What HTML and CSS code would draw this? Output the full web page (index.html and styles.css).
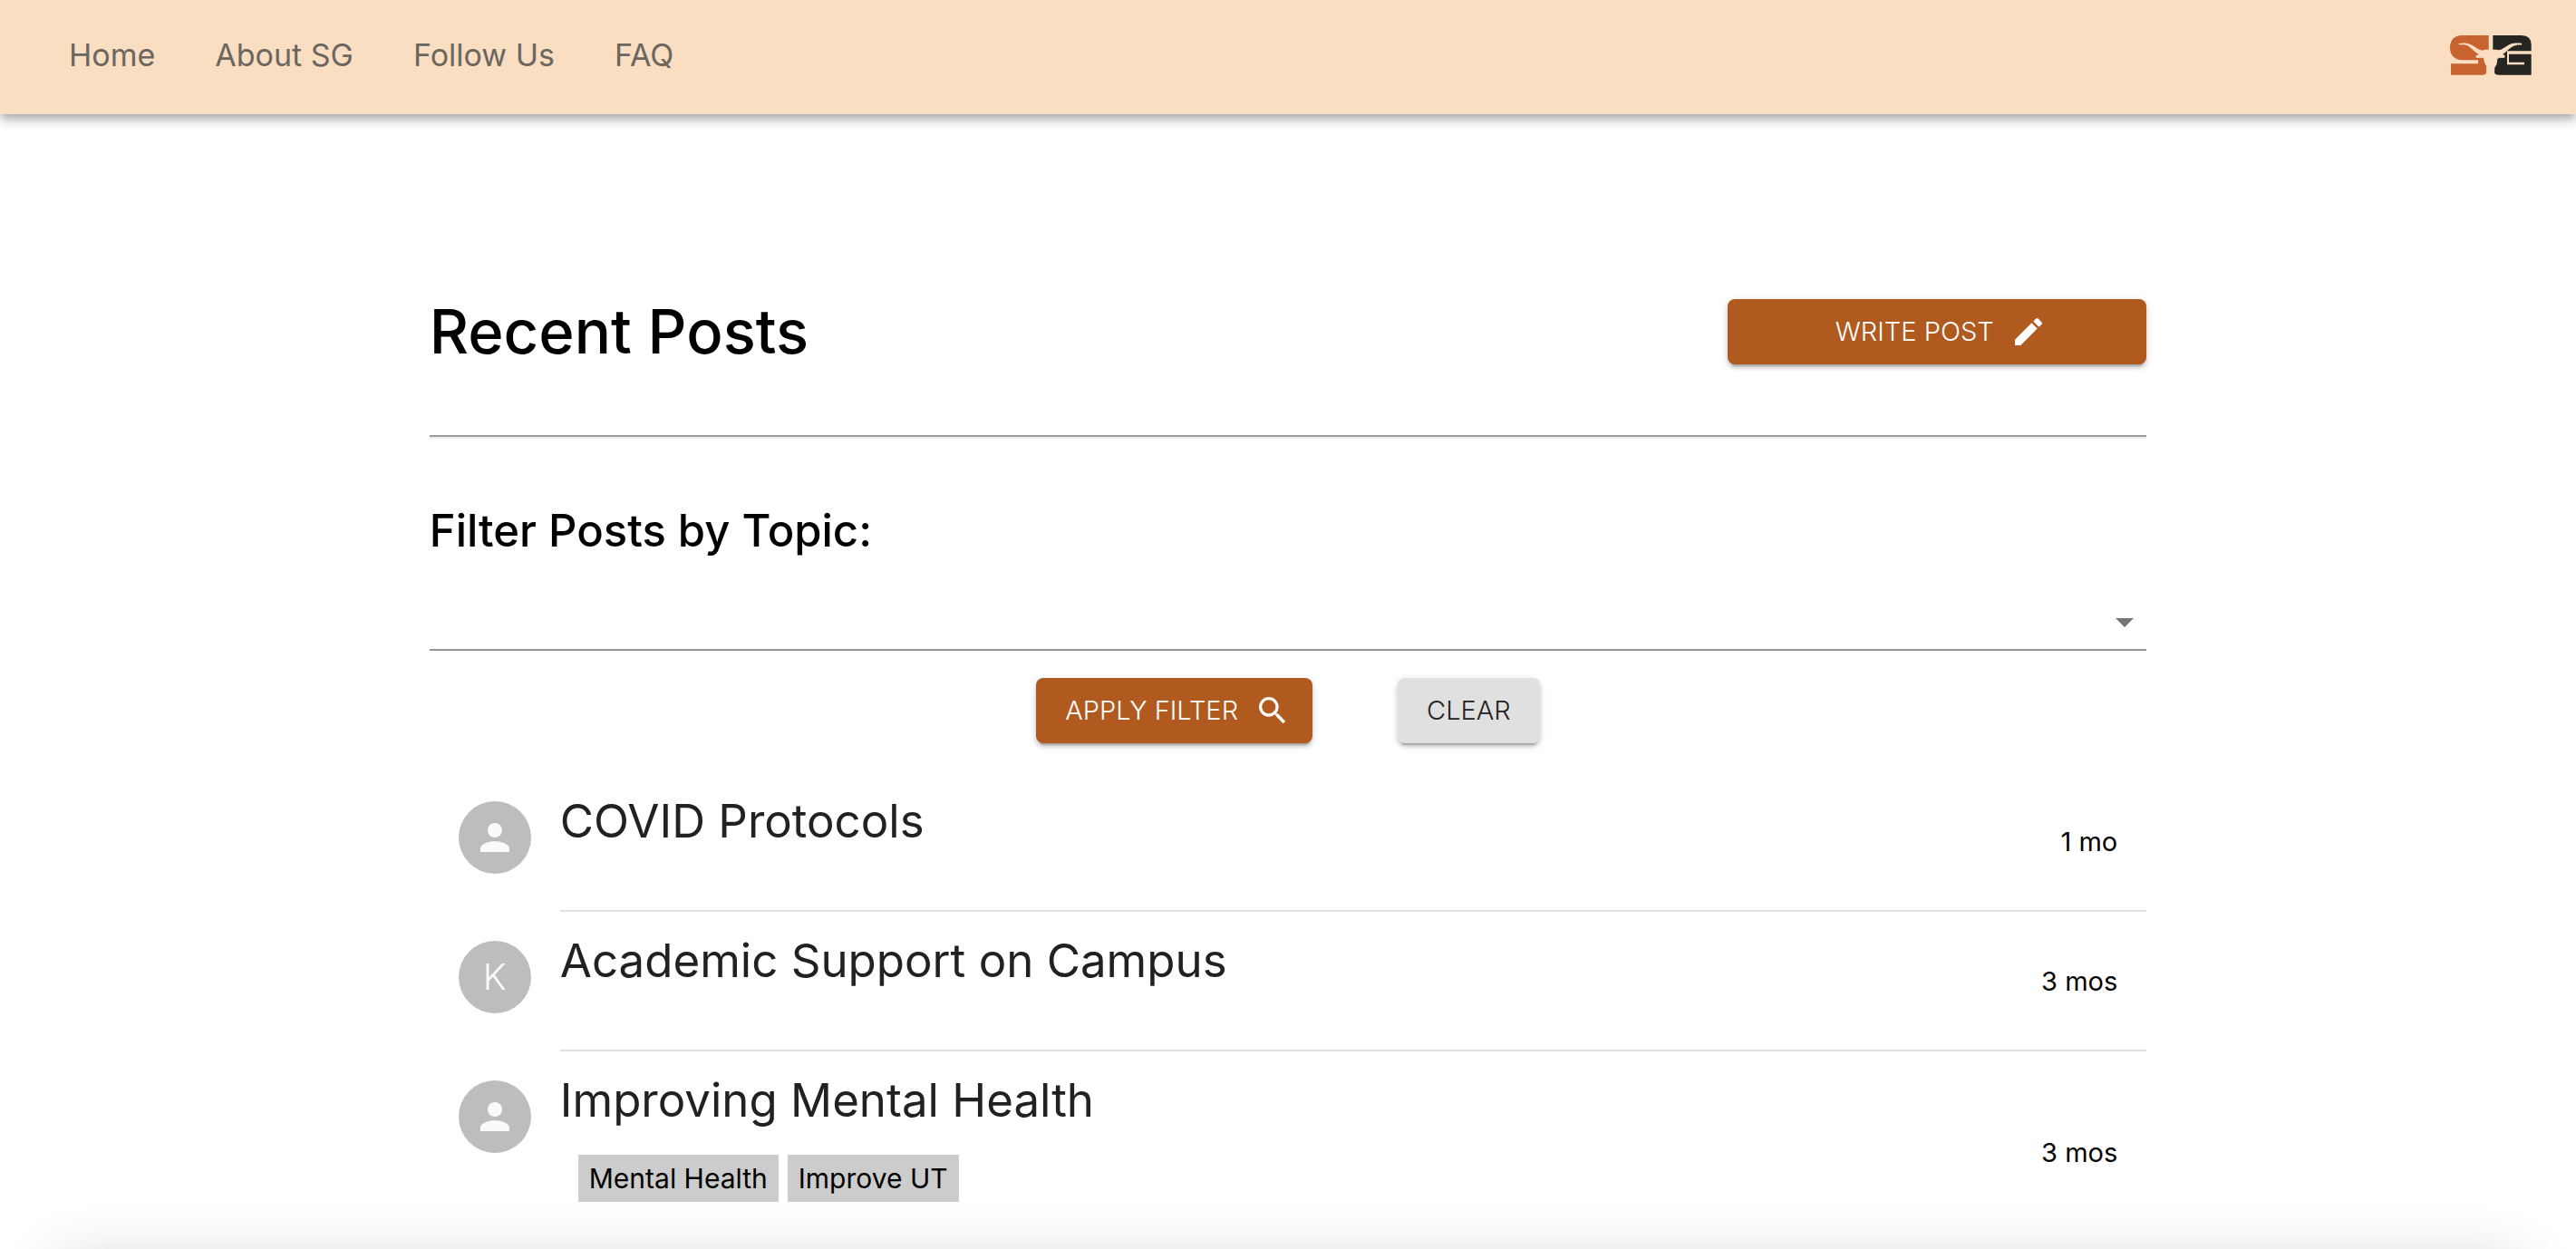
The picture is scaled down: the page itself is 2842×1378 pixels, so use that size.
FILE: index.html
```html
<!DOCTYPE html>
<html lang="en">
<head>
<meta charset="utf-8">
<meta name="viewport" content="width=device-width, initial-scale=1">
<title>Recent Posts</title>
<link rel="stylesheet" href="styles.css">
</head>
<body>
<header class="topbar">
  <nav class="nav">
    <a href="#home">Home</a>
    <a href="#about">About SG</a>
    <a href="#follow">Follow Us</a>
    <a href="#faq">FAQ</a>
  </nav>
  <a class="brand" href="#home" aria-label="SG">
    <svg class="logo" viewBox="129 85 270 132" aria-hidden="true">
      <path fill="#c8622f" d="M168 85H257V190H250V204Q250 216 238 216H132V179H222V167H172C146 167 129 151 129 126C129 102 143 85 168 85Z"/>
      <path fill="#262522" d="M271 85H366Q398 86 398 116V137H318V182H375V174H324V147H398V216H290Q275 216 275 204L271 190Z"/>
      <path fill="#fadec1" d="M158 112C170 109 187 110 199 116C214 124 222 134 237 135L244 132H283L291 134C304 131 314 121 326 115C339 109 354 110 366 111V117C352 115 342 118 333 124C321 132 313 142 304 147L312 153L308 160L293 159L286 163C284 173 286 180 280 187C274 194 278 200 276 207Q276 216 290 217H238Q250 215 250 206C248 199 253 193 249 186C242 178 242 167 240 160L232 159L217 160L213 153L224 148C209 139 201 128 190 121C180 115 171 117 158 116Z"/>
    </svg>
  </a>
</header>

<main class="page">
  <div class="heading">
    <h1>Recent Posts</h1>
    <button class="btn btn-primary btn-write" type="button">WRITE POST
      <svg class="icon" viewBox="0 0 24 24" aria-hidden="true"><path d="M3 17.25V21h3.75L17.81 9.94l-3.75-3.75L3 17.25zM20.71 7.04a1 1 0 0 0 0-1.41l-2.34-2.34a1 1 0 0 0-1.41 0l-1.83 1.83 3.75 3.75 1.83-1.83z"/></svg>
    </button>
  </div>
  <hr class="rule">

  <form class="filter">
    <h2><label for="topic">Filter Posts by Topic:</label></h2>
    <div class="select-wrap">
      <select id="topic"><option value=""></option><option>Mental Health</option><option>Improve UT</option></select>
      <svg class="caret" viewBox="0 0 24 24" aria-hidden="true"><path d="M7 10l5 5 5-5z"/></svg>
    </div>
    <div class="actions">
      <button class="btn btn-primary" type="button">APPLY FILTER
        <svg class="icon" viewBox="0 0 24 24" aria-hidden="true"><path d="M15.5 14h-.79l-.28-.27A6.47 6.47 0 0 0 16 9.5 6.5 6.5 0 1 0 9.5 16c1.61 0 3.09-.59 4.23-1.57l.27.28v.79l5 4.99L20.49 19l-4.99-5zm-6 0C7.01 14 5 11.99 5 9.5S7.01 5 9.5 5 14 7.01 14 9.5 11.99 14 9.5 14z"/></svg>
      </button>
      <button class="btn btn-plain" type="reset">CLEAR</button>
    </div>
  </form>

  <ul class="posts">
    <li class="post">
      <span class="avatar"><svg viewBox="0 0 24 24" aria-hidden="true"><path d="M12 12c2.21 0 4-1.79 4-4s-1.79-4-4-4-4 1.79-4 4 1.79 4 4 4zm0 2c-2.67 0-8 1.34-8 4v2h16v-2c0-2.66-5.33-4-8-4z"/></svg></span>
      <div class="post-body">
        <h3>COVID Protocols</h3>
        <time>1 mo</time>
      </div>
    </li>
    <li class="post">
      <span class="avatar">K</span>
      <div class="post-body">
        <h3>Academic Support on Campus</h3>
        <time>3 mos</time>
      </div>
    </li>
    <li class="post">
      <span class="avatar"><svg viewBox="0 0 24 24" aria-hidden="true"><path d="M12 12c2.21 0 4-1.79 4-4s-1.79-4-4-4-4 1.79-4 4 1.79 4 4 4zm0 2c-2.67 0-8 1.34-8 4v2h16v-2c0-2.66-5.33-4-8-4z"/></svg></span>
      <div class="post-body">
        <div>
          <h3>Improving Mental Health</h3>
          <div class="tags"><span>Mental Health</span><span>Improve UT</span></div>
        </div>
        <time>3 mos</time>
      </div>
    </li>
  </ul>
</main>
<div class="bottom-shade"></div>
</body>
</html>
```
FILE: styles.css
```css
* { box-sizing: border-box; }

body {
  margin: 0;
  background: #fff;
  color: #000;
  font: 400 29px/40px Inter, "Open Sans", sans-serif;
}

.topbar {
  display: flex;
  justify-content: space-between;
  align-items: center;
  height: 126px;
  padding: 0 49px 5px 76px;
  background: #fadec1;
  box-shadow: 0 4px 8px -2px rgba(0, 0, 0, .2), 0 8px 10px rgba(0, 0, 0, .14), 0 2px 20px rgba(0, 0, 0, .12);
}

.nav { display: flex; gap: 66px; }
.nav a {
  color: #6b665f;
  font-size: 34px;
  text-decoration: none;
}
.brand { display: flex; }
.logo { width: 90px; height: 44px; }

.page {
  width: 66.66%;
  margin: 0 auto;
  padding-top: 204px;
}

.heading {
  display: flex;
  justify-content: space-between;
  align-items: center;
}
h1, h2, h3 { margin: 0; }
h1 { font-size: 67px; line-height: 72px; font-weight: 500; }
h2 { font-size: 49px; line-height: 64px; font-weight: 500; }
h3 { font-size: 51px; line-height: 56px; font-weight: 400; color: #212121; }

.rule {
  height: 4px;
  margin: 78px 0 70px;
  border: 0;
  border-top: 2px solid #9a9a9a;
  border-bottom: 2px solid #eee;
}

.btn {
  display: flex;
  justify-content: center;
  align-items: center;
  gap: 18px;
  height: 72px;
  padding: 0 32px;
  border: 0;
  border-radius: 8px;
  font: inherit;
  font-weight: 300;
  box-shadow: 0 6px 2px -4px rgba(0, 0, 0, .2), 0 4px 4px rgba(0, 0, 0, .14), 0 2px 10px rgba(0, 0, 0, .12);
}
.btn-primary { background: #b15a20; color: #fff; }
.btn-plain { background: #e0e0e0; color: #212121; }
.btn-write { width: 462px; }
.icon { width: 40px; height: 40px; margin-right: -8px; fill: #fff; }

.select-wrap { position: relative; margin-top: 36px; }
select {
  display: block;
  width: 100%;
  height: 64px;
  border: 0;
  border-bottom: 2px solid #949494;
  border-radius: 0;
  background: transparent;
  color: inherit;
  font: inherit;
  appearance: none;
}
.caret {
  position: absolute;
  right: 0;
  top: 8px;
  width: 48px;
  height: 48px;
  fill: #757575;
  pointer-events: none;
}

.actions {
  display: flex;
  justify-content: center;
  gap: 94px;
  margin-top: 30px;
}

.posts { margin: 0; padding: 32px 0 0; list-style: none; }
.post {
  display: flex;
  gap: 32px;
  padding-left: 32px;
}
.avatar {
  display: flex;
  flex: none;
  justify-content: center;
  align-items: center;
  width: 80px;
  height: 80px;
  margin-top: 32px;
  border-radius: 50%;
  background: #bdbdbd;
  color: #fafafa;
  font-size: 40px;
  font-weight: 300;
}
.avatar svg { width: 48px; height: 48px; fill: #fafafa; }
.post-body {
  display: flex;
  flex: 1;
  justify-content: space-between;
  align-items: center;
  min-height: 154px;
  padding: 26px 32px 24px 0;
  border-bottom: 2px solid #e0e0e0;
}
.post-body > h3 { align-self: flex-start; }
.post:last-child .post-body { border-bottom: 0; }

.tags { display: flex; gap: 10px; padding: 32px 0 32px 20px; font-size: 30px; }
.tags span { padding: 6px 12px; background: #ccc; }

.bottom-shade {
  position: fixed;
  inset: auto 66px -122px;
  height: 100px;
  box-shadow: 0 0 70px rgba(0, 0, 0, .24);
  pointer-events: none;
}
```
